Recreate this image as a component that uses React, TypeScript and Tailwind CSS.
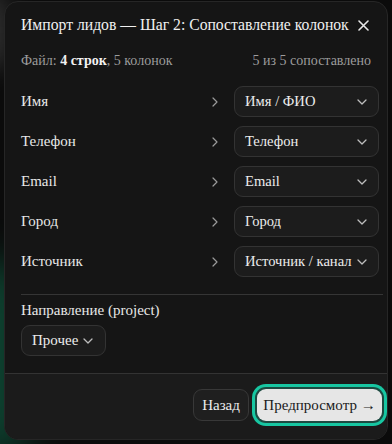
import React from "react";

const Chevron = ({ className = "" }: { className?: string }) => (
  <svg width="10" height="6" viewBox="0 0 10 6" className={className} fill="none">
    <path d="M1 1l4 4 4-4" stroke="currentColor" strokeWidth="1.3" strokeLinecap="round" strokeLinejoin="round" />
  </svg>
);

const Arrow = () => (
  <svg width="6" height="10" viewBox="0 0 6 10" fill="none" className="text-[#9a9a9a]">
    <path d="M1 1l4 4-4 4" stroke="currentColor" strokeWidth="1.2" strokeLinecap="round" strokeLinejoin="round" />
  </svg>
);

const rows: [string, string][] = [
  ["Имя", "Имя / ФИО"],
  ["Телефон", "Телефон"],
  ["Email", "Email"],
  ["Город", "Город"],
  ["Источник", "Источник / канал"],
];

export default function App() {
  return (
    <div className="relative w-[392px] h-[444px] overflow-hidden bg-[#0b0b0b] text-[#ececec] font-['Liberation_Serif','Times_New_Roman',serif]">
      <div className="absolute left-[-40px] top-[260px] w-[70px] h-[200px] rounded-full bg-[#0f5a40] blur-[20px] opacity-70" />
      <div className="absolute left-[-30px] top-[-10px] w-[40px] h-[80px] rounded-full bg-[#555] blur-[14px] opacity-50" />
      <div className="absolute left-[4px] top-[1px] w-[384px] h-[439px] rounded-[14px] border border-[#262626] bg-[#151515] flex flex-col overflow-hidden">
        <div className="pl-4 pr-4 pt-[11px]">
          <div className="flex items-center justify-between h-[24px]">
            <span className="text-[15.7px] leading-[24px] whitespace-nowrap text-[#f0f0f0]">
              Импорт лидов — Шаг 2: Сопоставление колонок
            </span>
            <svg width="11" height="11" viewBox="0 0 11 11" className="mr-[2px] shrink-0 text-[#e8e8e8]">
              <path d="M1 1l9 9M10 1l-9 9" stroke="currentColor" strokeWidth="1.6" strokeLinecap="round" />
            </svg>
          </div>
          <div className="mt-[15px] flex items-center justify-between text-[14px] leading-[18px] text-[#9c9c9c] h-[18px]">
            <span>
              Файл: <b className="text-[#f2f2f2]">4 строк</b>, 5 колонок
            </span>
            <span>5 из 5 сопоставлено</span>
          </div>
        </div>
        <div className="pl-4 pr-[8px] mt-[16px] flex flex-col gap-[9px]">
          {rows.map(([l, v]) => (
            <div key={l} className="flex items-center h-[31px] shrink-0">
              <span className="flex-1 text-[15px] text-[#e8e8e8]">{l}</span>
              <span className="mr-[16px] flex items-center">
                <Arrow />
              </span>
              <div className="relative w-[145px] h-[31px] rounded-[9px] border border-[#333] bg-[#1c1c1c] flex items-center pl-[10px]">
                <span className="text-[14.6px] text-[#ececec] whitespace-nowrap">{v}</span>
                <Chevron className="absolute right-[11px] top-[12px] text-[#bdbdbd]" />
              </div>
            </div>
          ))}
        </div>
        <div className="ml-4 mr-[4px] mt-[17px] h-px shrink-0 bg-[#353535]" />
        <div className="pl-4 mt-[5px] text-[15px] text-[#e8e8e8] h-[20px] leading-[20px] shrink-0">Направление (project)</div>
        <div className="pl-4 mt-[5px] shrink-0">
          <div className="w-[85px] h-[31px] rounded-[9px] border border-[#333] bg-[#1c1c1c] flex items-center pl-[10px] pr-[12px]">
            <span className="flex-1 text-[15px]">Прочее</span>
            <Chevron className="text-[#bdbdbd]" />
          </div>
        </div>
        <div className="mt-[17px] flex-1 border-t border-[#333] bg-[#1b1b1b] flex justify-end items-start pt-[15px] pr-[5px] gap-[8px]">
          <button className="h-[32px] w-[56px] rounded-[9px] border border-[#383838] bg-[#1f1f1f] text-[15px] text-[#ececec]">
            Назад
          </button>
          <button className="h-[32px] w-[125px] rounded-[9px] bg-[#e6e6e6] text-[15px] text-[#1a1a1a] ring-[3px] ring-[#17c7a2] ring-offset-2 ring-offset-[#1c4a41]">
            Предпросмотр →
          </button>
        </div>
      </div>
    </div>
  );
}
